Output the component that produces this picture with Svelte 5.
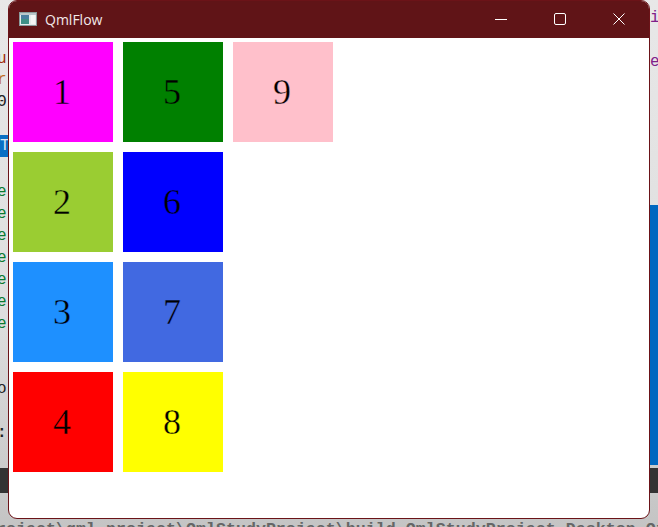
<script lang="ts">
  const cells = [
    { n: 1, color: '#ff00ff' },
    { n: 2, color: '#9acd32' },
    { n: 3, color: '#1e90ff' },
    { n: 4, color: '#ff0000' },
    { n: 5, color: '#008000' },
    { n: 6, color: '#0000ff' },
    { n: 7, color: '#4169e1' },
    { n: 8, color: '#ffff00' },
    { n: 9, color: '#ffc0cb' }
  ];
  const greens = [182, 204, 226, 248, 270, 292, 314];
</script>

<div class="desktop">
  <!-- editor peeking out behind the window -->
  <span class="frag red" style="top:49px">u</span>
  <span class="frag orange" style="top:70px">r</span>
  <span class="frag ink" style="top:92px">Θ</span>
  <div class="sel-left"><span>T</span></div>
  {#each greens as y}
    <span class="frag green" style="top:{y}px">e</span>
  {/each}
  <span class="frag ink" style="top:379px">o</span>
  <span class="frag ink bold" style="top:423px">:</span>
  <div class="dark-band"></div>
  <div class="blue-right"></div>
  <span class="frag purple right" style="top:8px">i</span>
  <span class="frag purple right" style="top:52px">e</span>
  <div class="path">roject\qml_project\QmlStudyProject\build-QmlStudyProject-Desktop_Qt_5</div>

  <div class="window">
    <header class="titlebar">
      <svg class="app-icon" width="18" height="14" viewBox="0 0 18 14">
        <rect x="0.5" y="0.5" width="17" height="13" fill="#e6ecec" stroke="#8a9a9c" />
        <rect x="1" y="1" width="16" height="2" fill="#b9c7ca" />
        <rect x="2" y="3" width="8" height="9" fill="#3f8f86" />
        <rect x="2" y="3" width="8" height="4" fill="#4a7fa0" />
        <rect x="12" y="3" width="4" height="9" fill="#f4f6f6" />
      </svg>
      <span class="title">QmlFlow</span>
      <div class="controls">
        <svg width="12" height="12" viewBox="0 0 12 12"><path d="M0 6.5H12" stroke="#fff" /></svg>
        <svg width="12" height="12" viewBox="0 0 12 12"><rect x="0.5" y="0.5" width="11" height="11" rx="1.5" fill="none" stroke="#fff" /></svg>
        <svg width="12" height="12" viewBox="0 0 12 12"><path d="M0.5 0.5L11.5 11.5M11.5 0.5L0.5 11.5" stroke="#fff" /></svg>
      </div>
    </header>
    <main class="flow">
      {#each cells as cell}
        <div class="cell" style="--c:{cell.color}">{cell.n}</div>
      {/each}
    </main>
  </div>
</div>

<style>
  :global(body) {
    margin: 0;
  }

  .desktop {
    position: relative;
    width: 658px;
    height: 527px;
    overflow: hidden;
    background: linear-gradient(#e8e8e8, #dedede 60%, #c4c4c4);
  }

  .frag {
    position: absolute;
    left: -3px;
    font: 16px/20px "Liberation Mono", monospace;
  }
  .frag.right { left: 650px; }
  .red { color: #a02a10; }
  .orange { color: #c06a20; }
  .ink { color: #222; }
  .bold { font-weight: 700; }
  .green { color: #0a7a30; }
  .purple { color: #80208a; }

  .sel-left {
    position: absolute;
    left: 0;
    top: 135px;
    width: 8px;
    height: 22px;
    background: #0a6fc4;
    color: #d8e8f4;
    font: 16px/22px "Liberation Mono", monospace;
    overflow: hidden;
  }

  .dark-band {
    position: absolute;
    left: 0;
    right: 0;
    top: 468px;
    height: 25px;
    background: #333;
  }

  .blue-right {
    position: absolute;
    left: 640px;
    right: 0;
    top: 205px;
    height: 260px;
    background: #0067c0;
  }

  .path {
    position: absolute;
    left: -4px;
    top: 520px;
    font: 700 16.67px/19px "Liberation Mono", monospace;
    color: #666;
    white-space: nowrap;
  }

  .window {
    position: absolute;
    left: 8px;
    top: 0;
    width: 640px;
    height: 517px;
    border: 1px solid #6b1318;
    border-radius: 9px;
    background: #fff;
    overflow: hidden;
    display: flex;
    flex-direction: column;
  }

  .titlebar {
    flex: none;
    height: 38px;
    margin-top: -1px;
    background: #601417;
    color: #fff;
    display: flex;
    align-items: center;
    padding-left: 10px;
  }

  .app-icon {
    margin-right: 8px;
  }

  .title {
    font: 14px "Open Sans", sans-serif;
    color: #f2e8e8;
  }

  .controls {
    margin-left: auto;
    display: flex;
    gap: 47px;
    padding-right: 24px;
  }

  .flow {
    padding: 4px;
    display: grid;
    grid-template-rows: repeat(4, 100px);
    grid-auto-flow: column;
    grid-auto-columns: 100px;
    gap: 10px;
  }

  .cell {
    display: flex;
    align-items: center;
    justify-content: center;
    padding-right: 2px;
    box-sizing: border-box;
    background: var(--c);
    font: 36px "Liberation Serif", serif;
    color: #000;
    -webkit-text-stroke: 0.35px var(--c);
  }
</style>
